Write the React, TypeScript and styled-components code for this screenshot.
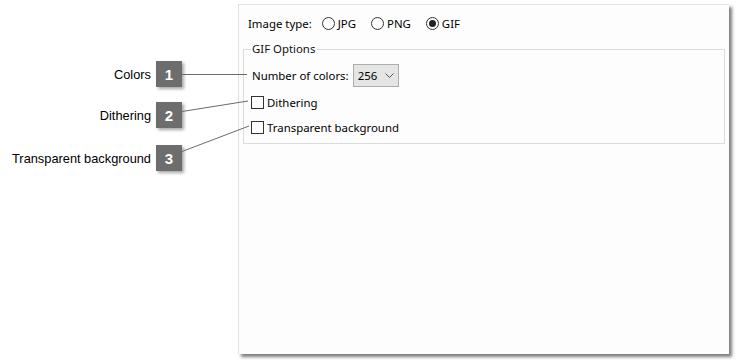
import styled, { createGlobalStyle } from "styled-components";

const Global = createGlobalStyle`
  html, body {
    margin: 0;
    padding: 0;
    background: #ffffff;
  }
`;

const Stage = styled.div`
  position: relative;
  width: 738px;
  height: 363px;
  display: flex;
  background: #ffffff;
`;

const Callouts = styled.div`
  width: 238px;
  box-sizing: border-box;
  padding: 61px 56px 0 0;
  display: flex;
  flex-direction: column;
  align-items: flex-end;
`;

const CalloutRow = styled.div<{ $gap: number }>`
  display: flex;
  align-items: center;
  height: 26px;
  margin-top: ${(p) => p.$gap}px;
`;

const CalloutLabel = styled.span`
  font-family: "Liberation Sans", Arial, sans-serif;
  font-size: 12.8px;
  color: #000;
  margin-right: 5px;
`;

const Badge = styled.div`
  width: 26px;
  height: 26px;
  background: #6d6d6d;
  color: #ffffff;
  font-family: "Liberation Sans", Arial, sans-serif;
  font-weight: bold;
  font-size: 15px;
  display: flex;
  align-items: center;
  justify-content: center;
  box-shadow: 2px 2px 3px rgba(0, 0, 0, 0.35);
`;

const Connectors = styled.svg`
  position: absolute;
  left: 0;
  top: 0;
  pointer-events: none;
`;

const Panel = styled.div`
  margin-top: 4px;
  width: 491px;
  height: 350px;
  box-sizing: border-box;
  background: #fdfdfd;
  border-top: 1px solid #e2e2e2;
  border-left: 1px solid #e2e2e2;
  box-shadow: 3px 3px 3px rgba(0, 0, 0, 0.5);
  padding: 10px 4px 0 4px;
  font-family: "Noto Sans", "Segoe UI", sans-serif;
  font-size: 11.4px;
  color: #000;
`;

const TypeRow = styled.div`
  display: flex;
  align-items: center;
  height: 16px;
  padding-left: 5px;
`;

const TypeLabel = styled.span`
  margin-right: 10px;
`;

const RadioOption = styled.label`
  display: flex;
  align-items: center;
  margin-right: 15px;
`;

const RadioCircle = styled.span<{ $on?: boolean }>`
  width: 13px;
  height: 13px;
  box-sizing: border-box;
  border: 1px solid #333;
  border-radius: 50%;
  margin-right: 3px;
  display: flex;
  align-items: center;
  justify-content: center;
  &::after {
    content: "";
    display: ${(p) => (p.$on ? "block" : "none")};
    width: 7px;
    height: 7px;
    border-radius: 50%;
    background: #222;
  }
`;

const Group = styled.fieldset`
  margin: 10px 0 0 0;
  padding: 0 0 8px 7px;
  border: 1px solid #dcdcdc;
  min-width: 0;
`;

const Legend = styled.legend`
  padding: 0 2px 0 1px;
  line-height: 16px;
  color: #111;
`;

const ColorsRow = styled.div`
  display: flex;
  align-items: center;
  margin-top: 7px;
  padding-left: 1px;
`;

const Select = styled.div`
  margin-left: 4px;
  width: 46px;
  height: 23px;
  box-sizing: border-box;
  background: #e5e5e5;
  border: 1px solid #adadad;
  display: flex;
  align-items: center;
  justify-content: space-between;
  padding: 0 4px 0 4px;
`;

const CheckRow = styled.div<{ $gap: number }>`
  display: flex;
  align-items: center;
  height: 16px;
  margin-top: ${(p) => p.$gap}px;
`;

const Box = styled.span`
  width: 13px;
  height: 13px;
  box-sizing: border-box;
  border: 1px solid #333;
  background: #fff;
  margin-right: 3px;
`;

const callouts = [
  { n: 1, label: "Colors", gap: 0 },
  { n: 2, label: "Dithering", gap: 15 },
  { n: 3, label: "Transparent background", gap: 17 },
];

export default function App() {
  return (
    <>
      <Global />
      <Stage>
        <Callouts>
          {callouts.map((c) => (
            <CalloutRow key={c.n} $gap={c.gap}>
              <CalloutLabel>{c.label}</CalloutLabel>
              <Badge>{c.n}</Badge>
            </CalloutRow>
          ))}
        </Callouts>
        <Panel>
          <TypeRow>
            <TypeLabel>Image type:</TypeLabel>
            <RadioOption>
              <RadioCircle />
              JPG
            </RadioOption>
            <RadioOption>
              <RadioCircle />
              PNG
            </RadioOption>
            <RadioOption>
              <RadioCircle $on />
              GIF
            </RadioOption>
          </TypeRow>
          <Group>
            <Legend>GIF Options</Legend>
            <ColorsRow>
              Number of colors:
              <Select>
                <span>256</span>
                <svg width="9" height="6" viewBox="0 0 9 6">
                  <path d="M0.5 0.5 L4.5 4.5 L8.5 0.5" fill="none" stroke="#555" strokeWidth="1" />
                </svg>
              </Select>
            </ColorsRow>
            <CheckRow $gap={7}>
              <Box />
              Dithering
            </CheckRow>
            <CheckRow $gap={9}>
              <Box />
              Transparent background
            </CheckRow>
          </Group>
        </Panel>
        <Connectors width="738" height="363">
          <g stroke="#6b6b6b" strokeWidth="1" fill="none">
            <line x1="182" y1="74.5" x2="247" y2="74.5" />
            <line x1="182" y1="111.5" x2="248" y2="101" />
            <line x1="182" y1="151.5" x2="249" y2="126" />
          </g>
        </Connectors>
      </Stage>
    </>
  );
}
